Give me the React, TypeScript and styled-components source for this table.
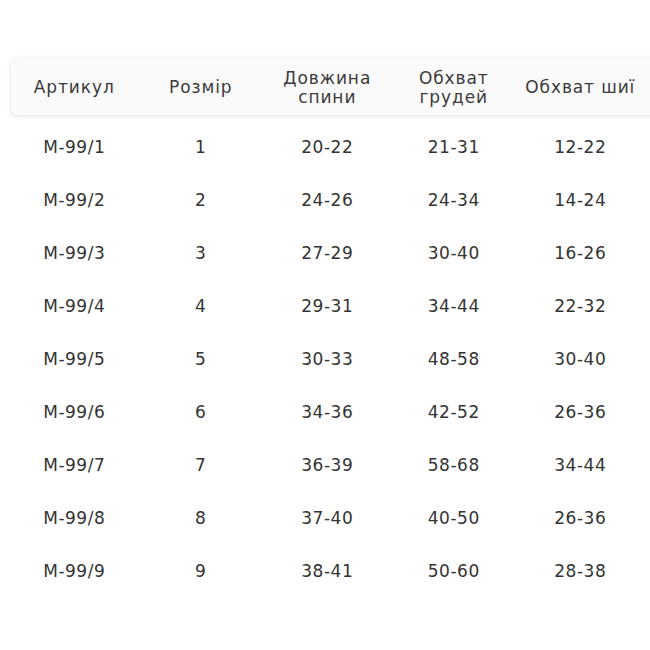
import React from "react";
import styled, { createGlobalStyle } from "styled-components";

const Global = createGlobalStyle`
  html, body { margin: 0; padding: 0; background: #ffffff; overflow: hidden; }
  body { font-family: "DejaVu Sans", "Noto Sans", sans-serif; }
`;

const Page = styled.div`
  width: 650px;
  height: 650px;
  padding: 58px 0 0 11px;
  box-sizing: border-box;
`;

const Table = styled.div`
  display: flex;
  flex-direction: column;
  width: 660px;
`;

const HeaderCard = styled.div`
  display: grid;
  grid-template-columns: repeat(5, 126.5px);
  height: 57px;
  align-items: center;
  background: #fafafa;
  border-radius: 6px;
  box-shadow: 0 1px 5px rgba(0, 0, 0, 0.12);
`;

const HeadCell = styled.div`
  text-align: center;
  font-size: 17px;
  line-height: 19px;
  color: #3a3a3a;
  letter-spacing: 0.9px;
  padding-top: 2px;
`;

const Body = styled.div`
  display: flex;
  flex-direction: column;
  padding-top: 5px;
`;

const Row = styled.div`
  display: grid;
  grid-template-columns: repeat(5, 126.5px);
  height: 53px;
  align-items: center;
`;

const Cell = styled.div`
  text-align: center;
  font-size: 17px;
  color: #333333;
  letter-spacing: 0.5px;
  padding-top: 1px;
`;

const headers = [
  ["Артикул"],
  ["Розмір"],
  ["Довжина", "спини"],
  ["Обхват", "грудей"],
  ["Обхват шиї"],
];

const rows = [
  ["M-99/1", "1", "20-22", "21-31", "12-22"],
  ["M-99/2", "2", "24-26", "24-34", "14-24"],
  ["M-99/3", "3", "27-29", "30-40", "16-26"],
  ["M-99/4", "4", "29-31", "34-44", "22-32"],
  ["M-99/5", "5", "30-33", "48-58", "30-40"],
  ["M-99/6", "6", "34-36", "42-52", "26-36"],
  ["M-99/7", "7", "36-39", "58-68", "34-44"],
  ["M-99/8", "8", "37-40", "40-50", "26-36"],
  ["M-99/9", "9", "38-41", "50-60", "28-38"],
];

export default function App() {
  return (
    <>
      <Global />
      <Page>
        <Table>
          <HeaderCard>
            {headers.map((h, i) => (
              <HeadCell key={i}>
                {h.map((line, j) => (
                  <div key={j}>{line}</div>
                ))}
              </HeadCell>
            ))}
          </HeaderCard>
          <Body>
            {rows.map((r, i) => (
              <Row key={i}>
                {r.map((c, j) => (
                  <Cell key={j}>{c}</Cell>
                ))}
              </Row>
            ))}
          </Body>
        </Table>
      </Page>
    </>
  );
}
